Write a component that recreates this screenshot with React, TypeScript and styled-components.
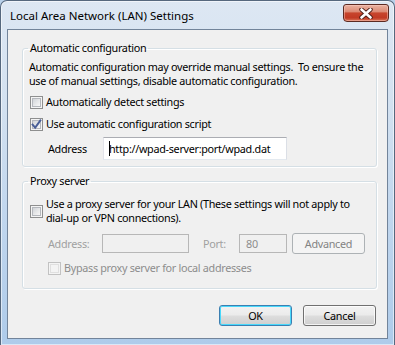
import React from 'react'
import styled, { createGlobalStyle, css } from 'styled-components'

// ____________________________________________________________________________
//
const GlobalStyle = createGlobalStyle`
  html, body {
    margin: 0;
    padding: 0;
    background: #b9d1ea;
  }
  body {
    font-family: 'Noto Sans', 'Open Sans', sans-serif;
    font-size: 10.8px;
    letter-spacing: -0.3px;
    color: #000;
  }
`

// ____________________________________________________________________________
//
type CheckProps = {
  checked?: boolean
  disabled?: boolean
}

const CheckBox: React.FC<CheckProps> = ({ checked, disabled }) => (
  <Box $disabled={disabled}>
    <BoxInner $disabled={disabled}>
      {checked && (
        <svg width="11" height="11" viewBox="0 0 11 11">
          <path
            d="M1.6 5.6 L4.2 8.6 L9.4 1.4"
            fill="none"
            stroke="#4a5f97"
            strokeWidth="1.9"
            strokeLinecap="square"
          />
        </svg>
      )}
    </BoxInner>
  </Box>
)

const CloseGlyph: React.FC = () => (
  <svg width="14" height="11" viewBox="0 0 14 11">
    <path
      d="M2.5 1.5 L11.5 9.5 M11.5 1.5 L2.5 9.5"
      stroke="#4a1c16"
      strokeWidth="4.4"
      strokeLinecap="round"
    />
    <path
      d="M2.5 1.5 L11.5 9.5 M11.5 1.5 L2.5 9.5"
      stroke="#ffffff"
      strokeWidth="2.6"
      strokeLinecap="round"
    />
  </svg>
)

// ____________________________________________________________________________
//
export default function App() {
  return (
    <>
      <GlobalStyle />
      <Window>
        <TitleBar>
          <Title>Local Area Network (LAN) Settings</Title>
          <CloseButton>
            <CloseGlyph />
          </CloseButton>
        </TitleBar>
        <Client>
          <Group>
            <Legend>Automatic configuration</Legend>
            <Description>
              Automatic configuration may override manual settings.{'\u00a0 '}To
              ensure the
              <br />
              use of manual settings, disable automatic configuration.
            </Description>
            <CheckRow $top={6}>
              <CheckBox />
              <CheckLabel>Automatically detect settings</CheckLabel>
            </CheckRow>
            <CheckRow $top={6}>
              <CheckBox checked />
              <CheckLabel>Use automatic configuration script</CheckLabel>
            </CheckRow>
            <FieldRow $top={5}>
              <FieldLabel $width={55}>Address</FieldLabel>
              <TextBox $width={184} $height={23}>
                <Caret />
                http://wpad-server:port/wpad.dat
              </TextBox>
            </FieldRow>
          </Group>

          <Group $top={6} $bottom={12}>
            <Legend>Proxy server</Legend>
            <CheckRow $top={8}>
              <CheckBox />
              <CheckLabel>
                Use a proxy server for your LAN (These settings will not apply
                to
                <br />
                dial-up or VPN connections).
              </CheckLabel>
            </CheckRow>
            <FieldRow $top={8}>
              <FieldLabel $width={54} $disabled>
                Address:
              </FieldLabel>
              <TextBox $width={87} $height={19} $disabled />
              <FieldLabel $width={36} $left={14} $disabled>
                Port:
              </FieldLabel>
              <TextBox $width={48} $height={19} $disabled>
                80
              </TextBox>
              <PushButton $left={5} $disabled>
                Advanced
              </PushButton>
            </FieldRow>
            <CheckRow $top={6} $indent={18}>
              <CheckBox disabled />
              <CheckLabel $disabled>
                Bypass proxy server for local addresses
              </CheckLabel>
            </CheckRow>
          </Group>

          <ButtonBar>
            <PushButton $default>OK</PushButton>
            <PushButton>Cancel</PushButton>
          </ButtonBar>
        </Client>
      </Window>
    </>
  )
}

// ____________________________________________________________________________
//
const Window = styled.div`
  width: 395px;
  height: 345px;
  box-sizing: border-box;
  display: flex;
  flex-direction: column;
  padding: 0 6px 6px 6px;
  border: 1px solid #56687e;
  border-bottom: none;
  border-radius: 7px 7px 0 0;
  background: linear-gradient(
    180deg,
    #dde7f3 0%,
    #d3e1f0 30%,
    #c2d7ee 60%,
    #aecbea 100%
  );
  box-shadow: inset 0 0 0 1px rgba(255, 255, 255, 0.55);
  overflow: hidden;
`

const TitleBar = styled.div`
  height: 28px;
  display: flex;
  align-items: flex-start;
  justify-content: space-between;
  padding-left: 3px;
`

const Title = styled.div`
  font-size: 11.5px;
  letter-spacing: 0;
  line-height: 16px;
  margin-top: 7px;
  color: #000;
`

const CloseButton = styled.div`
  width: 46px;
  height: 18px;
  margin-top: 3px;
  margin-right: -1px;
  box-sizing: border-box;
  display: flex;
  align-items: center;
  justify-content: center;
  border: 1px solid #5c2a22;
  border-radius: 3px 3px 4px 4px;
  background: linear-gradient(
    180deg,
    #eab2a2 0%,
    #dc8b75 42%,
    #c7452d 50%,
    #c13a24 80%,
    #d9765a 100%
  );
  box-shadow: inset 0 0 0 1px rgba(255, 210, 200, 0.45);
`

const Client = styled.div`
  flex: 1;
  display: flex;
  flex-direction: column;
  border: 1px solid #72849a;
  background: #f0f0f0;
  padding: 10px 10px 0 14px;
`

const Group = styled.fieldset<{ $top?: number; $bottom?: number }>`
  margin: ${(p) => p.$top ?? 0}px 0 0 0;
  padding: 0 6px ${(p) => p.$bottom ?? 6}px 6px;
  border: 1px solid #d5dfe5;
  border-radius: 3px;
  box-shadow: inset 1px 1px 0 #fff, 1px 1px 0 #fff;
  min-width: 0;
`

const Legend = styled.legend`
  padding: 0 2px;
  margin-left: -1px;
  line-height: 16px;
`

const Description = styled.div`
  margin-top: 4px;
  line-height: 14px;
  white-space: nowrap;
`

const CheckRow = styled.div<{ $top?: number; $indent?: number }>`
  display: flex;
  align-items: center;
  gap: 3px;
  margin-top: ${(p) => p.$top ?? 0}px;
  margin-left: ${(p) => 1 + (p.$indent ?? 0)}px;
  min-height: 16px;
`

const CheckLabel = styled.span<{ $disabled?: boolean }>`
  line-height: 14px;
  white-space: nowrap;
  color: ${(p) => (p.$disabled ? '#8d8d8d' : '#000')};
`

const Box = styled.span<{ $disabled?: boolean }>`
  flex: none;
  width: 13px;
  height: 13px;
  box-sizing: border-box;
  border: 1px solid ${(p) => (p.$disabled ? '#c2c2c2' : '#8e8f8f')};
  background: #f4f4f4;
  padding: 1px;
  display: flex;
`

const BoxInner = styled.span<{ $disabled?: boolean }>`
  flex: 1;
  display: flex;
  align-items: center;
  justify-content: center;
  border: 1px solid ${(p) => (p.$disabled ? '#e0e0e0' : '#b5b8bd')};
  background: ${(p) =>
    p.$disabled
      ? '#f4f4f4'
      : 'linear-gradient(135deg, #d1d4d8 0%, #e9eaeb 60%, #f7f7f7 100%)'};
  overflow: visible;
  svg {
    flex: none;
    margin: -2px;
  }
`

const FieldRow = styled.div<{ $top?: number }>`
  display: flex;
  align-items: center;
  margin-top: ${(p) => p.$top ?? 0}px;
`

const FieldLabel = styled.span<{
  $width: number
  $left?: number
  $disabled?: boolean
}>`
  width: ${(p) => p.$width}px;
  margin-left: ${(p) => p.$left ?? 19}px;
  flex: none;
  color: ${(p) => (p.$disabled ? '#a0a0a0' : '#000')};
`

const TextBox = styled.div<{
  $width: number
  $height: number
  $disabled?: boolean
}>`
  flex: none;
  position: relative;
  width: ${(p) => p.$width}px;
  height: ${(p) => p.$height}px;
  box-sizing: border-box;
  display: flex;
  align-items: center;
  padding-left: 5px;
  white-space: nowrap;
  overflow: hidden;
  border: 1px solid;
  ${(p) =>
    p.$disabled
      ? css`
          border-color: #b7b7b7;
          background: #f0f0f0;
          color: #8d8d8d;
          padding-left: 6px;
        `
      : css`
          border-color: #abadb3 #dbdfe6 #e3e9ef #e2e3ea;
          background: #fff;
          color: #000;
        `}
`

const Caret = styled.span`
  position: absolute;
  left: 5px;
  top: 3px;
  width: 1px;
  height: 15px;
  background: #000;
`

const PushButton = styled.div<{
  $default?: boolean
  $disabled?: boolean
  $left?: number
}>`
  flex: none;
  width: 73px;
  height: 21px;
  margin-left: ${(p) => p.$left ?? 0}px;
  box-sizing: border-box;
  display: flex;
  align-items: center;
  justify-content: center;
  border-radius: 3px;
  border: 1px solid #707070;
  background: linear-gradient(
    180deg,
    #f2f2f2 0%,
    #ebebeb 48%,
    #dddddd 52%,
    #cfcfcf 100%
  );
  box-shadow: inset 0 0 0 1px rgba(255, 255, 255, 0.75);
  ${(p) =>
    p.$default &&
    css`
      border-color: #3c7fb1;
      box-shadow: inset 0 0 0 1px #48d8fb;
    `}
  ${(p) =>
    p.$disabled &&
    css`
      border-color: #adb2b5;
      background: #f4f4f4;
      color: #838383;
      box-shadow: none;
    `}
`

const ButtonBar = styled.div`
  display: flex;
  justify-content: flex-end;
  gap: 11px;
  margin-top: 16px;
  margin-right: 1px;
`
